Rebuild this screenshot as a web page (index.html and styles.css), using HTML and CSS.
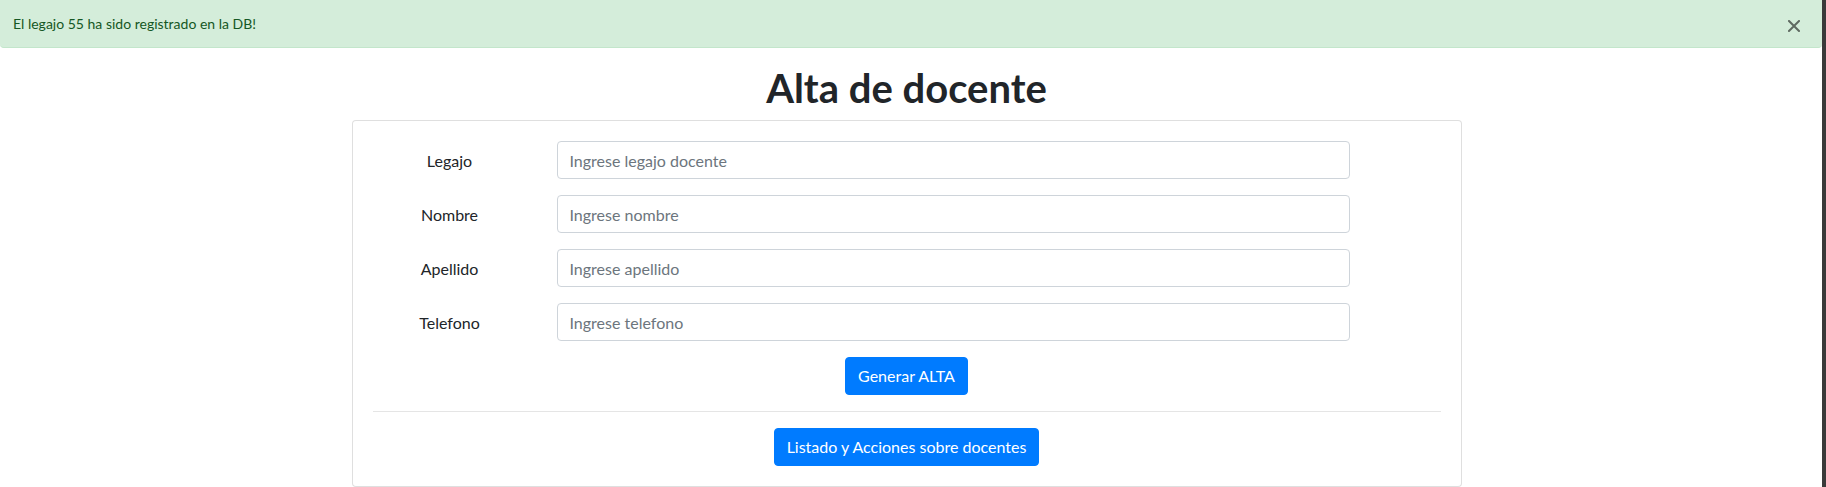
FILE: index.html
```html
<!DOCTYPE html>
<html lang="es">
<head>
<meta charset="utf-8">
<title>Alta de docente</title>
<link rel="stylesheet" href="styles.css">
</head>
<body>
<div class="page">
  <div class="viewport">
    <div class="alert">
      <span class="alert-text">El legajo 55 ha sido registrado en la DB!</span>
      <button class="close" type="button" aria-label="Close">
        <svg width="12" height="12" viewBox="0 0 12 12"><path d="M1 1 L11 11 M11 1 L1 11" stroke="#000" stroke-width="2" stroke-linecap="square"/></svg>
      </button>
    </div>
    <div class="main">
      <div class="container">
        <h1 class="title">Alta de docente</h1>
        <div class="card">
          <div class="card-body">
            <form class="form">
              <div class="form-row">
                <label class="form-label">Legajo</label>
                <input class="form-input" type="text" placeholder="Ingrese legajo docente">
              </div>
              <div class="form-row">
                <label class="form-label">Nombre</label>
                <input class="form-input" type="text" placeholder="Ingrese nombre">
              </div>
              <div class="form-row">
                <label class="form-label">Apellido</label>
                <input class="form-input" type="text" placeholder="Ingrese apellido">
              </div>
              <div class="form-row">
                <label class="form-label">Telefono</label>
                <input class="form-input" type="text" placeholder="Ingrese telefono">
              </div>
              <div class="actions">
                <button class="btn" type="button">Generar ALTA</button>
              </div>
            </form>
            <hr class="divider">
            <div class="actions">
              <button class="btn" type="button">Listado y Acciones sobre docentes</button>
            </div>
          </div>
        </div>
      </div>
    </div>
  </div>
  <div class="edge"></div>
</div>
</body>
</html>
```
FILE: styles.css
```css
* { box-sizing: border-box; }
html, body { margin: 0; padding: 0; }
body {
  font-family: Lato, "Noto Sans", "Liberation Sans", sans-serif;
  color: #212529;
  background: #fff;
}
.page {
  display: flex;
  width: 1826px;
  height: 487px;
  overflow: hidden;
}
.viewport {
  flex: 1;
  min-width: 0;
  display: flex;
  flex-direction: column;
}
.edge {
  width: 4px;
  background: #3a3a3a;
}
.alert {
  display: flex;
  align-items: center;
  justify-content: space-between;
  height: 49px;
  padding: 0 22px 1px 13px;
  background: #d4edda;
  border-bottom: 1px solid #c3e6cb;
  border-radius: 0 0 4px 4px;
  color: #155724;
  font-size: 14px;
}
.close {
  display: flex;
  align-items: center;
  justify-content: center;
  width: 12px;
  height: 12px;
  margin-top: 5px;
  padding: 0;
  border: 0;
  background: transparent;
  opacity: 0.55;
}
.main {
  padding-right: 9px;
}
.container {
  width: 1110px;
  margin: 0 auto;
}
.title {
  margin: 16px 0 8px;
  font-size: 40px;
  font-weight: 700;
  line-height: 48px;
  text-align: center;
  color: #212529;
}
.card {
  border: 1px solid rgba(0,0,0,0.125);
  border-radius: 4px;
  background: #fff;
}
.card-body {
  padding: 20px;
}
.form {
  display: flex;
  flex-direction: column;
  gap: 16px;
}
.form-row {
  display: grid;
  grid-template-columns: 154px 793px;
  column-gap: 30px;
  align-items: center;
}
.form-label {
  text-align: center;
  font-size: 16px;
}
.form-input {
  height: 38px;
  padding: 0 12px;
  border: 1px solid #ced4da;
  border-radius: 4px;
  font-family: inherit;
  font-size: 16px;
  color: #495057;
  background: #fff;
}
.form-input::placeholder {
  color: #6c757d;
  opacity: 1;
}
.actions {
  display: flex;
  justify-content: center;
}
.btn {
  height: 38px;
  padding: 0 12px;
  border: 1px solid #007bff;
  border-radius: 4px;
  background: #007bff;
  color: #fff;
  font-family: inherit;
  font-size: 16px;
  line-height: 1;
}
.divider {
  margin: 16px 0;
  border: 0;
  border-top: 1px solid rgba(0,0,0,0.1);
}
```
